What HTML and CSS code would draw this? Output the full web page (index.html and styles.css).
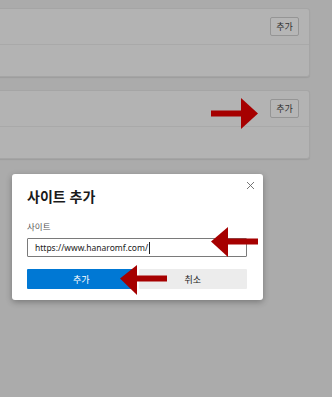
FILE: index.html
```html
<!DOCTYPE html>
<html lang="ko">
<head>
<meta charset="utf-8">
<link rel="stylesheet" href="styles.css">
</head>
<body>
<div class="page">
  <div class="card">
    <div class="row row-top"><span class="btn-sm">추가</span></div>
    <div class="row row-bottom"></div>
  </div>
  <div class="card">
    <div class="row row-top"><span class="btn-sm">추가</span></div>
    <div class="row row-bottom"></div>
  </div>
</div>
<div class="dialog">
  <div class="close">
    <svg width="9" height="9" viewBox="0 0 9 9"><path d="M1 1L8 8M8 1L1 8" stroke="#666" stroke-width="0.9" fill="none"/></svg>
  </div>
  <div class="title">사이트 추가</div>
  <div class="label">사이트</div>
  <div class="input">https://www.hanaromf.com/<span class="caret"></span></div>
  <div class="actions">
    <div class="btn primary">추가</div>
    <div class="btn secondary">취소</div>
  </div>
</div>
<svg class="arrows" width="332" height="397" viewBox="0 0 332 397">
  <g fill="#a60000">
    <rect x="211" y="110.5" width="32" height="6"/>
    <polygon points="241,98 258,113.5 241,129"/>
    <rect x="226" y="238.5" width="32" height="6"/>
    <polygon points="228,227 211,241.5 228,257"/>
    <rect x="135" y="275.5" width="32" height="6"/>
    <polygon points="137,265 120,278.5 137,295"/>
  </g>
</svg>
</body>
</html>
```

FILE: styles.css
```css
html, body {
  margin: 0;
  padding: 0;
}
body {
  width: 332px;
  height: 397px;
  background: #ababab;
  overflow: hidden;
  position: relative;
  font-family: "Noto Sans", "Noto Sans CJK KR", sans-serif;
}
.page {
  padding-top: 8px;
  display: flex;
  flex-direction: column;
  gap: 13px;
  width: 320px;
  margin-left: -10px;
}
.card {
  background: #b3b3b3;
  border: 1px solid #a5a5a5;
  border-radius: 3px;
  box-shadow: 0 1px 1px rgba(0,0,0,0.08);
  box-sizing: border-box;
}
.row {
  display: flex;
  justify-content: flex-end;
  align-items: center;
  padding-right: 10px;
}
.row-top {
  height: 36px;
  border-bottom: 1px solid #a9a9a9;
  box-sizing: border-box;
}
.row-bottom {
  height: 31px;
}
.btn-sm {
  width: 29px;
  height: 19px;
  box-sizing: border-box;
  border: 1px solid #959595;
  border-radius: 2px;
  background: #b6b6b6;
  font-family: "Noto Sans CJK KR", sans-serif;
  font-size: 9px;
  color: #333;
  display: flex;
  align-items: center;
  justify-content: center;
}
.dialog {
  position: absolute;
  left: 12px;
  top: 174px;
  width: 251px;
  height: 126px;
  box-sizing: border-box;
  background: #fff;
  border-radius: 3px;
  box-shadow: 0 2px 6px rgba(0,0,0,0.3);
  padding: 12px 16px 0 15px;
}
.close {
  position: absolute;
  right: 8px;
  top: 7px;
  width: 9px;
  height: 9px;
}
.close svg { display: block; }
.title {
  font-family: "Noto Sans CJK KR", sans-serif;
  font-weight: 700;
  font-size: 14px;
  line-height: 20px;
  color: #1a1a1a;
  margin-top: 0;
}
.label {
  font-family: "Noto Sans CJK KR", sans-serif;
  font-size: 8.5px;
  line-height: 10px;
  color: #555;
  margin-top: 15px;
}
.input {
  margin-top: 7px;
  height: 19px;
  box-sizing: border-box;
  border: 1px solid #7a7a7a;
  border-radius: 1px;
  padding-left: 7px;
  font-size: 8.5px;
  color: #222;
  display: flex;
  align-items: center;
}
.caret {
  display: inline-block;
  width: 1px;
  height: 12px;
  background: #222;
  margin-left: 1px;
}
.actions {
  margin-top: 12px;
  display: flex;
  gap: 3px;
}
.btn {
  flex: 1;
  height: 20px;
  display: flex;
  align-items: center;
  justify-content: center;
  font-family: "Noto Sans CJK KR", sans-serif;
  font-size: 9px;
  border-radius: 1px;
}
.primary {
  background: #0078d4;
  color: #fff;
}
.secondary {
  background: #ececec;
  color: #222;
}
.arrows {
  position: absolute;
  left: 0;
  top: 0;
}
```
